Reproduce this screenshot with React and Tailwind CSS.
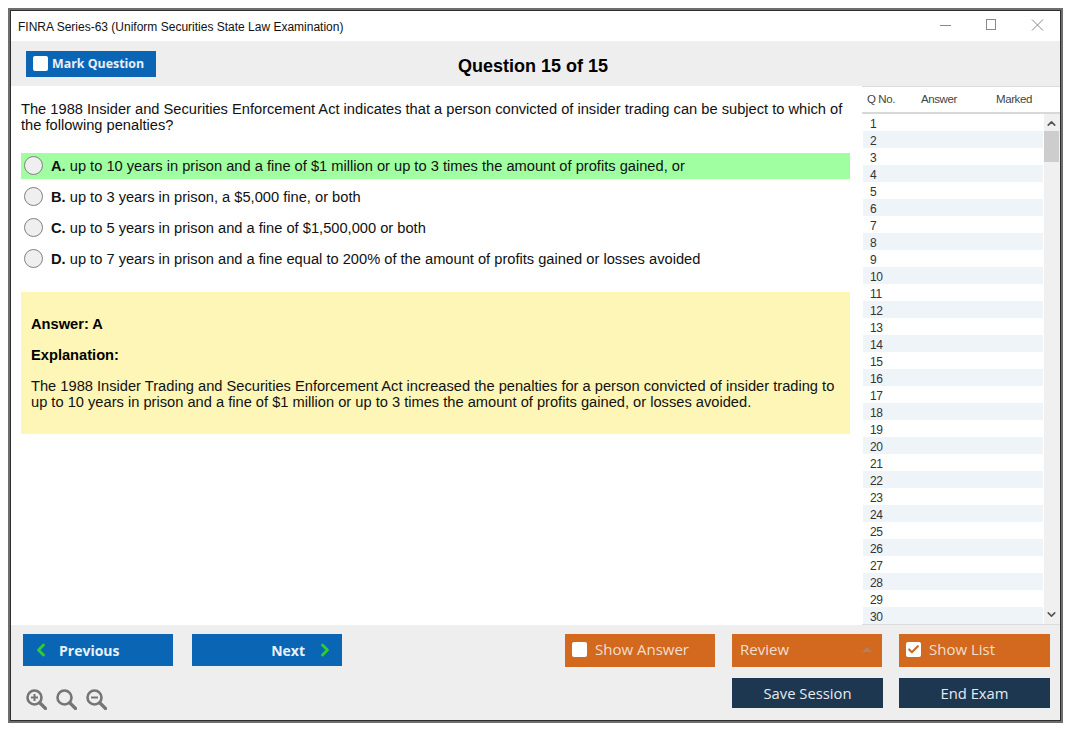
// Exam question review window
import React from 'react';
import { ChevronLeft, ChevronRight, ChevronUp, ChevronDown, Check } from 'lucide-react';

const sans = "font-['Liberation_Sans',Arial,sans-serif]";
const ui = "font-['Open_Sans','Noto_Sans',sans-serif]";

const options = [
  { letter: 'A.', text: 'up to 10 years in prison and a fine of $1 million or up to 3 times the amount of profits gained, or', correct: true },
  { letter: 'B.', text: 'up to 3 years in prison, a $5,000 fine, or both' },
  { letter: 'C.', text: 'up to 5 years in prison and a fine of $1,500,000 or both' },
  { letter: 'D.', text: 'up to 7 years in prison and a fine equal to 200% of the amount of profits gained or losses avoided' },
];

const rows = Array.from({ length: 30 }, (_, i) => i + 1);

const ZoomIcon = ({ mark }) => (
  <svg width="21" height="21" viewBox="0 0 21 21" fill="none" stroke="#757575" strokeWidth="2.6">
    <circle cx="8.5" cy="8.5" r="7" />
    <path d="M14 14l5.5 5.5" strokeWidth="3.2" strokeLinecap="round" />
    {mark === 'plus' && <path d="M5 8.5h7M8.5 5v7" strokeWidth="2" />}
    {mark === 'minus' && <path d="M5 8.5h7" strokeWidth="2" />}
  </svg>
);

const Box = ({ checked }) => (
  <span className="w-[15px] h-[15px] bg-white rounded-[2px] flex items-center justify-center shrink-0">
    {checked && <Check size={13} strokeWidth={4} className="text-[#d2691f]" />}
  </span>
);

const OrangeButton = ({ wide, children }) => (
  <div className={`${wide ? 'w-[151px]' : 'w-[150px]'} h-[33px] bg-[#d2691f] flex items-center px-[7px] pb-[2px] gap-[8px] text-[15px] text-[#f3dfce]`}>
    {children}
  </div>
);

export default function App() {
  return (
    <div className={`w-[1075px] h-[735px] bg-white pt-[8px] pl-[8px] ${sans}`}>
      <div className="w-[1055px] h-[715px] border-2 border-[#6e6e6e]">
        <div className="w-full h-full border border-[#2e2e2e] bg-white flex flex-col">
          {/* Barre de titre */}
          <div className="h-[30px] flex items-center justify-between pl-[7px] shrink-0">
            <span className="text-[12px] text-[#111] mt-[2px]">FINRA Series-63 (Uniform Securities State Law Examination)</span>
            <div className="flex items-center pr-[9px] mb-[2px]">
              <svg width="135" height="14" viewBox="0 0 135 14" fill="none" stroke="#8a8a8a">
                <path d="M24 7.5h11" />
                <rect x="70.5" y="1.5" width="9" height="10" />
                <path d="M116 1.5l11 11M127 1.5l-11 11" />
              </svg>
            </div>
          </div>

          {/* Bandeau question */}
          <div className="h-[45px] bg-[#eeeeee] flex items-center relative shrink-0 pl-[15px]">
            <div className={`w-[130px] h-[26px] bg-[#0a66b4] flex items-center gap-[4px] pl-[7px] text-[12.4px] font-bold text-[#e8f0f8] ${ui}`}>
              <Box />
              <span className="mt-[2px]">Mark Question</span>
            </div>
            <span className="absolute left-[447px] top-[12px] text-[18px] font-bold text-black">Question 15 of 15</span>
          </div>

          {/* Contenu */}
          <div className="flex-1 flex min-h-0">
            <div className="w-[851px] shrink-0 pl-[10px] pr-[12px] pt-[15px]">
              <p className="text-[14.67px] leading-[16px] text-[#111]">
                The 1988 Insider and Securities Enforcement Act indicates that a person convicted of insider trading can be subject to which of the following penalties?
              </p>
              <div className="mt-[20px] flex flex-col gap-[5px]">
                {options.map(option => (
                  <div
                    key={option.letter}
                    className={`h-[26px] flex items-center pl-[3px] gap-[8px] text-[14.67px] text-[#111] ${option.correct ? 'bg-[#a0ffa0]' : ''}`}
                  >
                    <span className="w-[19px] h-[19px] rounded-full border border-[#808080] bg-[#efefef] shrink-0 -mt-[1px]" />
                    <span><b>{option.letter}</b> {option.text}</span>
                  </div>
                ))}
              </div>

              {/* Bloc réponse */}
              <div className="mt-[20px] h-[142px] bg-[#fdf6b6] px-[10px] pt-[24px] text-[14.67px] leading-[16px] text-[#111]">
                <p className="font-bold text-black">Answer: A</p>
                <p className="font-bold text-black mt-[15px]">Explanation:</p>
                <p className="mt-[15px]">
                  The 1988 Insider Trading and Securities Enforcement Act increased the penalties for a person convicted of insider trading to up to 10 years in prison and a fine of $1 million or up to 3 times the amount of profits gained, or losses avoided.
                </p>
              </div>
            </div>

            {/* Liste des questions */}
            <div className="w-[198px] flex flex-col border-t border-[#dcdcdc] border-b text-[#333]">
              <div className="h-[27px] flex items-center text-[11.5px] tracking-[-0.4px] border-b-2 border-[#d8d8d8] shrink-0 text-[#444]">
                <span className="w-[59px] pl-[5px]">Q No.</span>
                <span className="w-[75px]">Answer</span>
                <span>Marked</span>
              </div>
              <div className="flex-1 flex min-h-0 overflow-hidden">
                <div className="w-[182px] pl-[1px] pr-[1px] overflow-hidden">
                  {rows.map(row => (
                    <div
                      key={row}
                      className={`h-[17.03px] leading-[21px] pl-[7px] text-[12px] tracking-[-0.3px] ${row % 2 === 0 ? 'bg-[#eff4f9]' : 'bg-white'}`}
                    >
                      {row}
                    </div>
                  ))}
                </div>
                <div className="w-[16px] bg-[#f0f0f0] relative">
                  <ChevronUp size={13} strokeWidth={3} className="absolute left-[1px] top-[3px] text-[#555]" />
                  <div className="absolute left-0 top-[17px] w-[15px] h-[31px] bg-[#cdcdcd]" />
                  <ChevronDown size={13} strokeWidth={3} className="absolute left-[1px] bottom-[3px] text-[#555]" />
                </div>
              </div>
            </div>
          </div>

          {/* Barre du bas */}
          <div className={`h-[95px] shrink-0 bg-[#eeeeee] pl-[12px] pt-[9px] flex justify-between ${ui}`}>
            <div className="flex flex-col">
              <div className="flex gap-[19px] text-[14px] font-bold text-[#e8f0f8]">
                <div className="w-[150px] h-[32px] bg-[#0a66b4] flex items-center pl-[8px] gap-[8px]">
                  <ChevronLeft size={20} strokeWidth={3.5} className="text-[#2ecc2e]" />
                  <span>Previous</span>
                </div>
                <div className="w-[150px] h-[32px] bg-[#0a66b4] flex items-center justify-end pr-[7px] gap-[10px]">
                  <span>Next</span>
                  <ChevronRight size={20} strokeWidth={3.5} className="text-[#2ecc2e]" />
                </div>
              </div>
              <div className="flex gap-[9px] mt-[23px] pl-[3px]">
                <ZoomIcon mark="plus" />
                <ZoomIcon />
                <ZoomIcon mark="minus" />
              </div>
            </div>

            <div className="flex flex-col gap-[11px] pr-[10px]">
              <div className="flex gap-[17px]">
                <OrangeButton><Box /><span>Show Answer</span></OrangeButton>
                <OrangeButton>
                  <span className="flex-1 ml-[1px]">Review</span>
                  <span className="w-0 h-0 border-x-[5px] border-x-transparent border-b-[5px] border-b-[#b08060] mr-[3px]" />
                </OrangeButton>
                <OrangeButton wide><Box checked /><span>Show List</span></OrangeButton>
              </div>
              <div className="flex gap-[16px] justify-end text-[14.8px] text-[#e4eaf0]">
                <div className="w-[151px] h-[30px] bg-[#1c374f] flex items-center justify-center">Save Session</div>
                <div className="w-[151px] h-[30px] bg-[#1c374f] flex items-center justify-center">End Exam</div>
              </div>
            </div>
          </div>
        </div>
      </div>
    </div>
  );
}
